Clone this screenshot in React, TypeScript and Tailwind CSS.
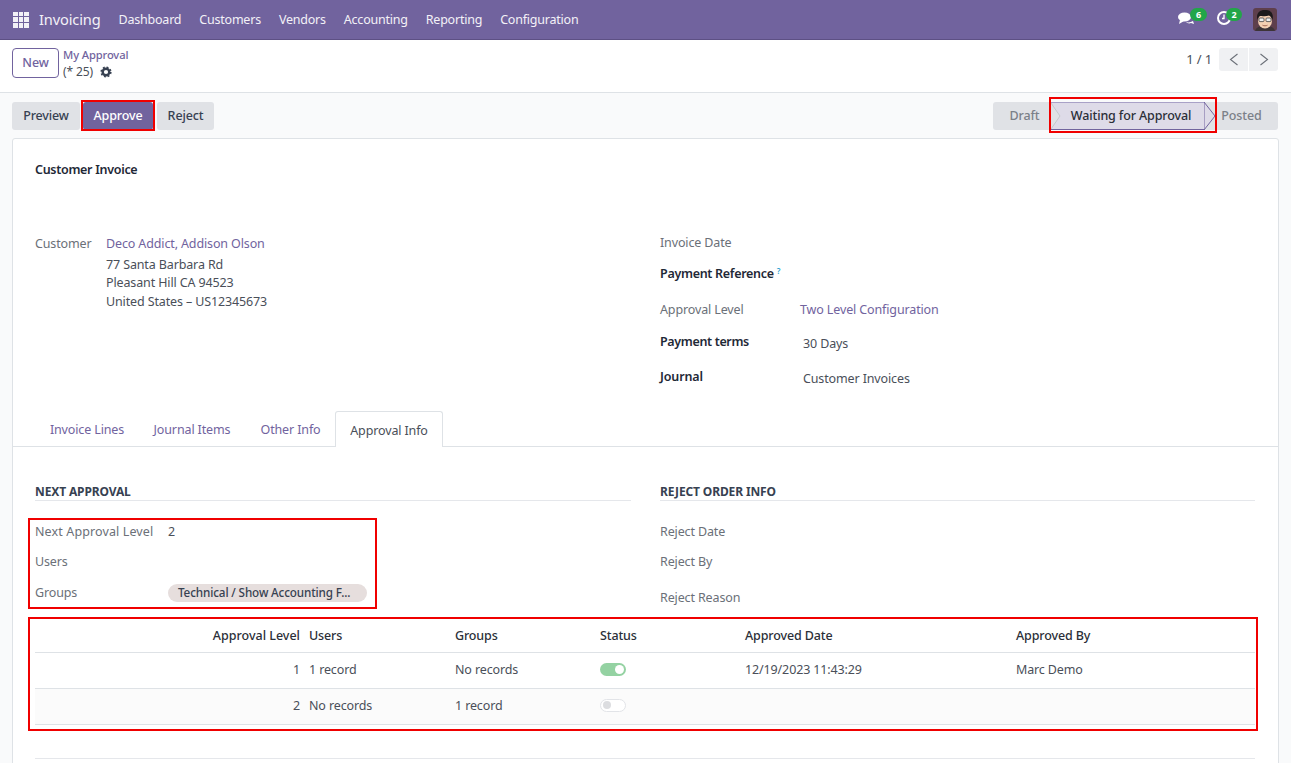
const NAV_ITEMS = ['Dashboard', 'Customers', 'Vendors', 'Accounting', 'Reporting', 'Configuration'];

function AppsIcon() {
  return (
    <div className="grid w-[16px] h-[16px] grid-cols-3 gap-[1px]">
      {Array.from({ length: 9 }).map((_, i) => (
        <span key={i} className="bg-[#f3f1f7]" />
      ))}
    </div>
  );
}

function Avatar() {
  return (
    <svg width="24" height="23" viewBox="0 0 24 23" className="rounded-[3px]">
      <rect width="24" height="23" fill="#5e3f4c" />
      <path d="M2 23c1-4 5-5 10-5s9 1 10 5z" fill="#3d3438" />
      <ellipse cx="12" cy="13" rx="7" ry="7.5" fill="#f4d0b3" />
      <path d="M4.500 12C2.500 5 7 1.500 12.500 2c5-.3 8.500 3.500 7 10-.8-2.500-2-4-3.500-4.500-3 1.200-7.500 .5-9.500 .5-1 1-1.700 2.500-2 4z" fill="#1d1a1b" />
      <rect x="6" y="10" width="5" height="3.600" rx="1" fill="#eeeeee" stroke="#444" strokeWidth=".8" />
      <rect x="13" y="10" width="5" height="3.600" rx="1" fill="#eeeeee" stroke="#444" strokeWidth=".8" />
      <path d="M9.500 17.200c1.500 .8 3.500 .8 5 0" stroke="#9a5a48" strokeWidth=".9" fill="none" />
    </svg>
  );
}

function Toggle({ on }: { on: boolean }) {
  if (on) {
    return (
      <span className="mb-[2px] flex h-[13px] w-[26px] items-center justify-end rounded-full bg-[#94d2a2] pr-[2px]">
        <span className="h-[9px] w-[9px] rounded-full bg-white" />
      </span>
    );
  }
  return (
    <span className="mb-[2px] flex h-[13px] w-[26px] items-center rounded-full border border-[#e2e4e8] bg-white pl-[2px]">
      <span className="h-[8px] w-[8px] rounded-full bg-[#dcdde0]" />
    </span>
  );
}

function Outline({ className }: { className: string }) {
  return <div className={`pointer-events-none absolute border-2 border-[#f00000] ${className}`} />;
}

export default function App() {
  return (
    <div className="relative h-[763px] w-[1291px] overflow-hidden bg-[#f9fafb] text-[12.5px] tracking-[-0.13px] text-[#4a4f59] [font-family:'Noto_Sans',sans-serif]">
      {/* navbar */}
      <header className="flex h-[40px] items-center border-b border-[#5d5084] bg-[#71639e] pl-[13px] pr-[14px] text-[#f3f1f7]">
        <AppsIcon />
        <span className="ml-[10px] text-[14.6px]">Invoicing</span>
        <nav className="ml-[18px] flex gap-[18px] pt-[1px] tracking-[-0.22px]">
          {NAV_ITEMS.map((item) => (
            <span key={item}>{item}</span>
          ))}
        </nav>
        <div className="ml-auto flex items-center">
          <div className="relative mb-[1px] mr-[23px] h-[14px] w-[16px]">
            <svg width="17" height="14" viewBox="0 0 17 14" fill="white" className="block">
              <ellipse cx="6.500" cy="5" rx="6.500" ry="4.500" />
              <path d="M2 8l-1 4 5-3zM8 10c3 1 5 0 7-1l1 3-3-1c-2 1-4 0-5-1z" />
            </svg>
            <span className="absolute -top-[4px] left-[12px] flex h-[13px] w-[17px] items-center justify-center rounded-full bg-[#22a648] text-[9px] font-bold text-white">6</span>
          </div>
          <div className="relative mb-[3px] mr-[22px] h-[14px] w-[14px]">
            <svg width="14" height="14" viewBox="0 0 14 14" fill="none" stroke="white" strokeWidth="2" className="block">
              <circle cx="7" cy="7" r="6" />
              <path d="M7 3.500v4H5" strokeWidth="1.300" />
            </svg>
            <span className="absolute -top-[3px] left-[9px] flex h-[13px] w-[16px] items-center justify-center rounded-full bg-[#22a648] text-[9px] font-bold text-white">2</span>
          </div>
          <Avatar />
        </div>
      </header>

      {/* control panel */}
      <div className="flex h-[53px] items-start justify-between border-b border-[#dee2e6] bg-white pl-[12px] pr-[13px]">
        <div className="mt-[8px] flex">
          <button className="h-[30px] w-[47px] rounded-[4px] border border-[#71639e] font-medium text-[#71639e]">New</button>
          <div className="ml-[4px] leading-[14px]">
            <div className="text-[11.2px] font-medium text-[#71639e]">My Approval</div>
            <div className="mt-[2px] flex h-[15px] items-center text-[12px]">
              (* 25)
              <svg width="12" height="12" viewBox="0 0 12 12" className="ml-[7px]">
                <circle cx="6" cy="6" r="3.300" fill="none" stroke="#374151" strokeWidth="2.400" />
                <circle cx="6" cy="6" r="4.800" fill="none" stroke="#374151" strokeWidth="1.600" strokeDasharray="1.900 1.870" />
              </svg>
            </div>
          </div>
        </div>
        <div className="mt-[8px] flex items-center">
          <span className="mr-[7px] text-[13px]">1 / 1</span>
          <button className="flex h-[23px] w-[29px] items-center justify-center rounded-l-[3px] bg-[#f0f1f3]">
            <svg width="10" height="13" viewBox="0 0 10 13" fill="none" stroke="#6b7078" strokeWidth="1.100"><path d="M8.500 1L1.500 6.500L8.500 12" /></svg>
          </button>
          <button className="ml-px flex h-[23px] w-[29px] items-center justify-center rounded-r-[3px] bg-[#f0f1f3]">
            <svg width="10" height="13" viewBox="0 0 10 13" fill="none" stroke="#6b7078" strokeWidth="1.100"><path d="M1.500 1L8.500 6.500L1.500 12" /></svg>
          </button>
        </div>
      </div>

      {/* status bar */}
      <div className="flex h-[45px] items-start justify-between pl-[12px] pr-[13px] pt-[9px] font-medium">
        <div className="flex gap-[3px]">
          <button className="h-[28px] w-[68px] rounded-[3px] bg-[#e0e2e6] text-[#374151]">Preview</button>
          <button className="h-[28px] w-[70px] rounded-[3px] bg-[#71639e] text-white">Approve</button>
          <button className="ml-[1px] h-[28px] w-[57px] rounded-[3px] bg-[#e0e2e6] text-[#374151]">Reject</button>
        </div>
        <div className="flex h-[28px] w-[285px] items-center rounded-[3px] bg-[#e0e2e6] text-[#7b8088]">
          <span className="w-[58px] pl-[5px] text-center">Draft</span>
          <div className="relative flex h-[28px] w-[154px] items-center justify-center border-y border-[#71639e] border-t-[#a9a1c7] bg-[#dedbe8] pl-[6px] text-[#2b2f38]">
            Waiting for Approval
            <svg width="12" height="28" viewBox="0 0 12 28" className="absolute -right-[11px] -top-px">
              <path d="M0 0L11 14L0 28Z" fill="#dedbe8" stroke="#71639e" />
            </svg>
            <svg width="10" height="26" viewBox="0 0 10 26" className="absolute left-0 top-0">
              <path d="M0 0L9 13L0 26" fill="#e0e2e6" stroke="#c5c7cc" />
            </svg>
          </div>
          <span className="w-[73px] text-center">Posted</span>
        </div>
      </div>

      {/* sheet */}
      <main className="mx-[12px] h-[700px] rounded-t-[3px] border border-[#dee2e6] bg-white">
        <div className="px-[22px] pt-[22px]">
          <div className="font-semibold leading-[18px] tracking-[-0.3px] text-[#1f2937]">Customer Invoice</div>
          <div className="mt-[56px] flex">
            <div className="w-[625px]">
              <div className="flex">
                <span className="w-[71px] text-[#6b7078]">Customer</span>
                <div className="leading-[18.7px]">
                  <div className="text-[#71639e]">Deco Addict, Addison Olson</div>
                  <div className="mt-[2px]">77 Santa Barbara Rd</div>
                  <div>Pleasant Hill CA 94523</div>
                  <div>United States – US12345673</div>
                </div>
              </div>
            </div>
            <div className="-mt-[1px] flex-1 leading-[18px]">
              <div className="text-[#6b7078]">Invoice Date</div>
              <div className="mt-[13px] font-semibold tracking-[-0.3px] text-[#1f2937]">
                Payment Reference <sup className="text-[8px] text-[#1f9fcf]">?</sup>
              </div>
              <div className="mt-[18px] flex items-center">
                <span className="w-[140px] text-[#6b7078]">Approval Level</span>
                <span className="text-[#71639e]">Two Level Configuration</span>
              </div>
              <div className="mt-[14px] flex">
                <span className="w-[143px] font-semibold tracking-[-0.35px] text-[#1f2937]">Payment terms</span>
                <span className="mt-[2px]">30 Days</span>
              </div>
              <div className="mt-[15px] flex">
                <span className="w-[143px] font-semibold text-[#1f2937]">Journal</span>
                <span className="mt-[2px]">Customer Invoices</span>
              </div>
            </div>
          </div>
        </div>

        {/* tabs */}
        <div className="mt-[23px] flex h-[36px] border-b border-[#dee2e6] pl-[23px] text-[#71639e]">
          <span className="flex w-[102px] items-center justify-center pt-[3px]">Invoice Lines</span>
          <span className="flex w-[108px] items-center justify-center pt-[3px]">Journal Items</span>
          <span className="flex w-[89px] items-center justify-center pt-[3px]">Other Info</span>
          <span className="-mb-px flex w-[108px] items-center justify-center rounded-t-[3px] border border-b-0 border-[#dee2e6] bg-white pt-[3px] text-[#4a4f59]">Approval Info</span>
        </div>

        <div className="px-[22px] pt-[37px]">
          <div className="flex gap-[29px]">
            <div className="w-[596px]">
              <div className="border-b border-[#e5e7eb] text-[12px] font-bold leading-[16px] text-[#374151]">NEXT APPROVAL</div>
              <div className="mt-[21px] flex h-[20px] items-center">
                <span className="w-[133px] tracking-[0.12px] text-[#6b7078]">Next Approval Level</span>
                <span>2</span>
              </div>
              <div className="mt-[10px] flex h-[20px] items-center text-[#6b7078]">Users</div>
              <div className="mt-[11px] flex h-[20px] items-center">
                <span className="w-[133px] text-[#6b7078]">Groups</span>
                <span className="flex h-[18px] w-[199px] items-center rounded-full bg-[#e6dedd] pl-[10px] text-[11.7px] font-medium text-[#374151]">Technical / Show Accounting F...</span>
              </div>
            </div>
            <div className="w-[595px]">
              <div className="border-b border-[#e5e7eb] text-[12px] font-bold leading-[16px] text-[#374151]">REJECT ORDER INFO</div>
              <div className="mt-[21px] flex h-[20px] items-center text-[#6b7078]">Reject Date</div>
              <div className="mt-[10px] flex h-[20px] items-center text-[#6b7078]">Reject By</div>
              <div className="mt-[16px] flex h-[20px] items-center text-[#6b7078]">Reject Reason</div>
            </div>
          </div>

          {/* approval lines */}
          <table className="mt-[11px] w-[1220px] table-fixed border-collapse">
            <thead>
              <tr className="h-[33px] border-b border-[#dee2e6] text-left text-[#2b2f38]">
                <th className="w-[270px] pr-[5px] pt-[3px] text-right font-medium tracking-[0px]">Approval Level</th>
                <th className="w-[146px] pl-[4px] pt-[3px] font-medium">Users</th>
                <th className="w-[145px] pl-[4px] pt-[3px] font-medium">Groups</th>
                <th className="w-[145px] pl-[4px] pt-[3px] font-medium">Status</th>
                <th className="w-[271px] pl-[4px] pt-[3px] font-medium">Approved Date</th>
                <th className="pl-[4px] pt-[3px] font-medium">Approved By</th>
              </tr>
            </thead>
            <tbody>
              <tr className="h-[36px] border-b border-[#dee2e6]">
                <td className="pr-[5px] text-right">1</td>
                <td className="pl-[4px]">1 record</td>
                <td className="pl-[4px]">No records</td>
                <td className="pl-[4px]"><Toggle on /></td>
                <td className="pl-[4px]">12/19/2023 11:43:29</td>
                <td className="pl-[4px]">Marc Demo</td>
              </tr>
              <tr className="h-[36px] border-b border-[#dee2e6] bg-[#fbfbfb]">
                <td className="pr-[5px] text-right">2</td>
                <td className="pl-[4px]">No records</td>
                <td className="pl-[4px]">1 record</td>
                <td className="pl-[4px]"><Toggle on={false} /></td>
                <td />
                <td />
              </tr>
            </tbody>
          </table>
          <div className="mt-[33px] w-[1220px] border-b border-[#e5e7eb]" />
        </div>
      </main>

      {/* red annotation boxes */}
      <Outline className="left-[81px] top-[100px] h-[31px] w-[74px]" />
      <Outline className="left-[1049px] top-[97px] h-[36px] w-[168px]" />
      <Outline className="left-[28px] top-[518px] h-[91px] w-[349px]" />
      <Outline className="left-[28px] top-[617px] h-[114px] w-[1230px]" />
    </div>
  );
}
